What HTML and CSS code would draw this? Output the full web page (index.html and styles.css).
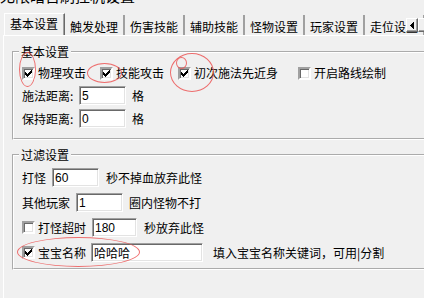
FILE: index.html
```html
<!DOCTYPE html>
<html lang="zh-CN">
<head>
    <meta charset="UTF-8">
    <title>挂机设置</title>
    <link rel="stylesheet" href="styles.css">
</head>
<body>
    <div class="title"><span>无限暗日刷挂机设置</span></div>

    <div class="tabs">
        <div class="tab active">基本设置</div>
        <div class="tab">触发处理</div>
        <div class="tab">伤害技能</div>
        <div class="tab">辅助技能</div>
        <div class="tab">怪物设置</div>
        <div class="tab">玩家设置</div>
        <div class="tab">走位设置</div>
    </div>
    <div class="scroller">
        <span class="arrow-btn"><svg width="4" height="7" viewBox="0 0 4 7"><path d="M3 0h1v7h-1zM2 1h1v5h-1zM1 2h1v3h-1zM0 3h1v1h-1z" fill="#000"/></svg></span>
        <span class="arrow-btn"></span>
    </div>

    <div class="panel">
        <fieldset class="group first">
            <legend>基本设置</legend>
            <div class="checks">
                <label class="check w78"><span class="cb on"></span>物理攻击</label>
                <label class="check w78"><span class="cb on"></span>技能攻击</label>
                <label class="check w120"><span class="cb on"></span>初次施法先近身</label>
                <label class="check"><span class="cb"></span>开启路线绘制</label>
            </div>
            <div class="row gap5">
                <span class="lbl">施法距离:</span>
                <input class="box" type="text" value="5">
                <span class="unit">格</span>
            </div>
            <div class="row gap4">
                <span class="lbl">保持距离:</span>
                <input class="box" type="text" value="0">
                <span class="unit">格</span>
            </div>
        </fieldset>

        <fieldset class="group second">
            <legend>过滤设置</legend>
            <div class="row gap6">
                <span>打怪</span>
                <input class="box" type="text" value="60">
                <span class="after">秒不掉血放弃此怪</span>
            </div>
            <div class="row gap6">
                <span>其他玩家</span>
                <input class="box" type="text" value="1">
                <span>圈内怪物不打</span>
            </div>
            <div class="row gap6">
                <label class="check"><span class="cb"></span>打怪超时</label>
                <input class="box short" type="text" value="180">
                <span class="after">秒放弃此怪</span>
            </div>
            <div class="row gap6">
                <label class="check"><span class="cb on"></span>宝宝名称</label>
                <input class="box long" type="text" value="哈哈哈">
                <span class="hint">填入宝宝名称关键词，可用|分割</span>
            </div>
        </fieldset>
    </div>

    <!-- hand-drawn red marks over the screenshot -->
    <div class="mark m1"></div>
    <div class="mark m2"></div>
    <div class="mark m3"></div>
    <div class="mark m4"></div>
    <div class="mark m5"></div>
</body>
</html>
```

FILE: styles.css
```css
html {
    overflow: hidden;
}
body {
    margin: 0;
    width: 424px;
    height: 298px;
    overflow: hidden;
    position: relative;
    background-color: #f0f0f0;
    color: #000;
    font-family: "Noto Sans CJK SC", sans-serif;
    font-size: 12px;
}
.title {
    height: 13px;
    overflow: hidden;
    font-size: 15px;
    line-height: 18px;
    white-space: nowrap;
}
.title span {
    display: block;
    margin-top: -13px;
}

/* tab strip */
.tabs {
    display: flex;
    height: 22px;
    padding-left: 4px;
    white-space: nowrap;
    overflow: hidden;
}
.tab {
    flex-shrink: 0;
    margin-top: 2px;
    padding: 2px 5px 0 5px;
    height: 18px;
    line-height: 19px;
    border-right: 2px solid #a0a0a0;
}
.tab.active {
    margin-top: 0;
    height: 21px;
    padding: 0 6px 0 5px;
    line-height: 20px;
    border-top: 1px solid #fff;
    border-left: 1px solid #fff;
    border-right: 1px solid #696969;
    box-shadow: inset -1px 0 #a0a0a0;
}
.scroller {
    position: absolute;
    left: 406px;
    top: 18px;
    width: 18px;
    overflow: hidden;
    display: flex;
}
.arrow-btn {
    flex-shrink: 0;
    width: 10px;
    height: 12px;
    display: flex;
    align-items: center;
    justify-content: center;
    background-color: #f0f0f0;
    border: 1px solid;
    border-color: #fff #696969 #696969 #fff;
    box-shadow: inset -1px -1px #a0a0a0;
}

/* tab page */
.panel {
    margin-left: 3px;
    padding-left: 8px;
    height: 262px;
    overflow: hidden;
    border-top: 1px solid #fff;
    border-left: 1px solid #fff;
}
.group {
    width: 440px;
    margin: 0;
    padding: 0 0 10px 8px;
    border: 2px groove #fff;
}
.group.first {
    margin-top: 9px;
}
.group.second {
    margin-top: 8px;
    padding-bottom: 6px;
}
.group legend {
    margin-left: -3px;
    padding: 0 2px;
    line-height: 14px;
}
.checks {
    display: flex;
    height: 16px;
    margin-top: 6px;
    align-items: center;
}
.check {
    flex-shrink: 0;
    display: flex;
    align-items: center;
    gap: 3px;
    line-height: 14px;
    white-space: nowrap;
}
.w78 { width: 78px; }
.w120 { width: 120px; }
.cb {
    width: 9px;
    height: 9px;
    background-color: #fff;
    border: 2px solid;
    border-color: #a0a0a0 #fff #fff #a0a0a0;
    box-shadow: inset 1px 1px #696969, inset -1px -1px #e3e3e3;
    position: relative;
}
.cb.on::after {
    content: "";
    position: absolute;
    left: 1px;
    top: 1px;
    width: 7px;
    height: 7px;
    background: url("data:image/svg+xml,%3Csvg xmlns='http://www.w3.org/2000/svg' width='7' height='7' viewBox='0 0 7 7'%3E%3Cpath d='M6 0h1v1h-1zM5 1h2v1h-2zM0 2h1v1h-1zM4 2h3v1h-3zM0 3h2v1h-2zM3 3h3v1h-3zM0 4h5v1h-5zM1 5h3v1h-3zM2 6h1v1h-1z' fill='%23000'/%3E%3C/svg%3E");
}
.row {
    display: flex;
    align-items: center;
    gap: 6px;
    height: 19px;
    line-height: 14px;
    white-space: nowrap;
}
.row > * {
    flex-shrink: 0;
}
.gap4 { margin-top: 4px; }
.gap5 { margin-top: 5px; }
.gap6 { margin-top: 6px; }
.lbl {
    width: 52px;
    margin-right: -1px;
}
.box {
    box-sizing: border-box;
    width: 47px;
    height: 19px;
    margin: 0;
    padding: 1px 2px;
    background-color: #fff;
    border: 1px solid;
    border-color: #a0a0a0 #fff #fff #a0a0a0;
    box-shadow: inset 1px 1px #696969, inset -1px -1px #e3e3e3;
    font-family: "Liberation Sans", "Noto Sans CJK SC", sans-serif;
    font-size: 12px;
    color: #000;
    outline: none;
}
.box.short { width: 45px; }
.box.long {
    width: 112px;
    margin-left: -1px;
}
.after { margin-left: 1px; }
.hint { margin-left: 4px; }

/* red annotation circles */
.mark {
    position: absolute;
    border: 1.5px solid rgba(236, 86, 86, 0.85);
    border-radius: 50%;
}
.m1 { left: 19px; top: 52px; width: 15px; height: 33px; }
.m2 { left: 87px; top: 63px; width: 33px; height: 18px; }
.m3 { left: 170px; top: 53px; width: 42px; height: 37px; }
.m4 { left: 176px; top: 57px; width: 9px; height: 10px; }
.m5 { left: 17px; top: 237px; width: 121px; height: 28px; }
```
